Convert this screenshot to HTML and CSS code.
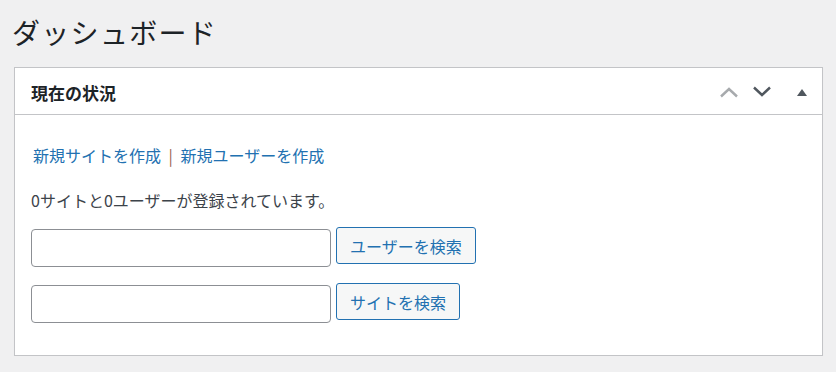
FILE: index.html
```html
<!DOCTYPE html>
<html lang="ja">
<head>
  <meta charset="UTF-8" />
  <title>ダッシュボード</title>
  <link rel="stylesheet" href="styles.css">
</head>
<body>
  <div class="wrap">
    <h1 class="page-title">ダッシュボード</h1>

    <!-- 現在の状況 -->
    <div class="postbox">
      <div class="postbox-header">
        <h2 class="hndle">現在の状況</h2>
        <div class="handle-actions">
          <button class="handle-btn disabled" aria-label="上へ移動">
            <svg width="20" height="12" viewBox="0 0 20 12"><path d="M2 10.5 L10 3 L18 10.5" fill="none" stroke="currentColor" stroke-width="2.4"/></svg>
          </button>
          <button class="handle-btn" aria-label="下へ移動">
            <svg width="20" height="12" viewBox="0 0 20 12"><path d="M2 1.5 L10 9 L18 1.5" fill="none" stroke="currentColor" stroke-width="2.4"/></svg>
          </button>
          <button class="handle-btn toggle" aria-label="パネルを切り替え">
            <svg width="10" height="7" viewBox="0 0 10 7"><path d="M0 7 L5 0 L10 7 Z" fill="currentColor"/></svg>
          </button>
        </div>
      </div>

      <div class="inside">
        <p class="quick-links">
          <a href="#">新規サイトを作成</a>
          <span class="sep">|</span>
          <a href="#">新規ユーザーを作成</a>
        </p>
        <p class="youhave">0サイトと0ユーザーが登録されています。</p>

        <form class="search-form">
          <input type="search" class="search-input" />
          <button type="button" class="button">ユーザーを検索</button>
        </form>
        <form class="search-form">
          <input type="search" class="search-input" />
          <button type="button" class="button">サイトを検索</button>
        </form>
      </div>
    </div>
  </div>
</body>
</html>
```

FILE: styles.css
```css
body {
  margin: 0;
  padding: 0;
  background-color: #f0f0f1;
  color: #3c434a;
  font-family: "Noto Sans CJK JP", "Noto Sans", sans-serif;
  font-size: 16px;
}

.wrap {
  padding: 0 13px 0 14px;
}

.page-title {
  margin: 0 0 0 -2px;
  padding-top: 12px;
  height: 67px;
  box-sizing: border-box;
  font-size: 28px;
  font-weight: 400;
  line-height: 40px;
  color: #1d2327;
  letter-spacing: 1.3px;
}

.postbox {
  background-color: #fff;
  border: 1px solid #c3c4c7;
  box-shadow: 0 1px 1px rgba(0, 0, 0, 0.04);
  height: 289px;
  box-sizing: border-box;
}

.postbox-header {
  display: flex;
  align-items: center;
  justify-content: space-between;
  height: 46px;
  border-bottom: 1px solid #c3c4c7;
}

.hndle {
  margin: 0;
  padding-left: 16px;
  padding-top: 3px;
  font-size: 17px;
  font-weight: 700;
  color: #1d2327;
}

.handle-actions {
  display: flex;
  align-items: center;
  padding-right: 15px;
  padding-top: 2px;
  gap: 13px;
}

.handle-btn {
  background: none;
  border: none;
  padding: 0;
  display: flex;
  color: #50575e;
  cursor: pointer;
}

.handle-btn.disabled {
  color: #a7aaad;
}

.handle-btn.toggle {
  margin-left: 12px;
  color: #50575e;
}

.inside {
  padding: 28px 16px 0 16px;
}

.quick-links {
  margin: 0 0 21px 2px;
  line-height: 24px;
}

.quick-links a {
  color: #2271b1;
  text-decoration: none;
}

.sep {
  color: #9a6452;
  margin: 0 4px;
}

.youhave {
  margin: 0 0 15px 0;
  line-height: 24px;
}

.search-form {
  display: flex;
  align-items: flex-start;
  gap: 5px;
  margin-bottom: 16px;
}

.search-input {
  width: 300px;
  height: 38px;
  margin-top: 2px;
  box-sizing: border-box;
  border: 1px solid #8c8f94;
  border-radius: 4px;
  background-color: #fff;
}

.button {
  height: 37px;
  padding: 0 13px;
  font-family: inherit;
  font-size: 16px;
  color: #2271b1;
  background-color: #f6f7f7;
  border: 1px solid #2271b1;
  border-radius: 3px;
  cursor: pointer;
}
```
